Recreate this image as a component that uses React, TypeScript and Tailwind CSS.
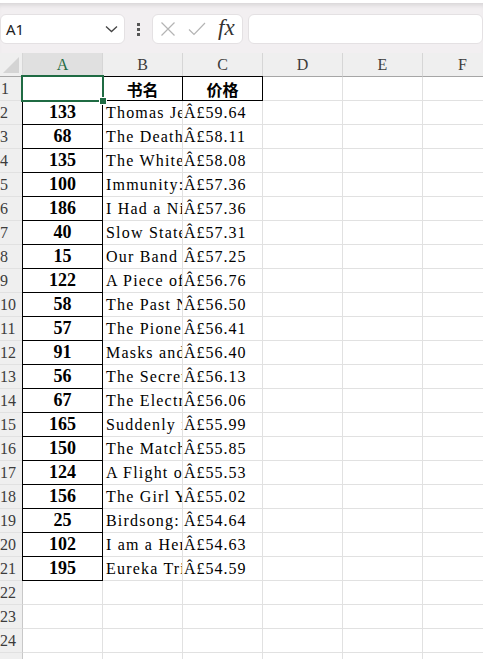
import React from 'react';

const ids = [133, 68, 135, 100, 186, 40, 15, 122, 58, 57, 91, 56, 67, 165, 150, 124, 156, 25, 102, 195];
const titles = [
  'Thomas Jefferson and the Tripoli Pirates',
  'The Death of Humanity',
  'The White Cat and the Monk',
  'Immunity: How Elie Metchnikoff Changed',
  'I Had a Nice Time And Other Lies',
  'Slow States of Collapse: Poems',
  'Our Band Could Be Your Life',
  'A Piece of Sky, a Grain of Rice',
  'The Past Never Ends',
  'The Pioneer Woman Cooks',
  'Masks and Shadows',
  'The Secret of Dreadwillow Carse',
  'The Electric Pickle',
  'Suddenly in Love',
  "The Matchmaker's Playbook",
  'A Flight of Arrows',
  'The Girl You Lost',
  'Birdsong: A Story in Pictures',
  'I am a Hero Omnibus Volume 1',
  'Eureka Trivia 6.0',
];
const prices = ['59.64', '58.11', '58.08', '57.36', '57.36', '57.31', '57.25', '56.76', '56.50', '56.41', '56.40', '56.13', '56.06', '55.99', '55.85', '55.53', '55.02', '54.64', '54.63', '54.59'];

const cols = ['A', 'B', 'C', 'D', 'E', 'F'];
const serif = "font-['Liberation_Serif',serif]";
const cell = 'h-6 border-r border-b border-[#e1e1e1] overflow-hidden whitespace-nowrap';
const boxed = 'h-6 border-r border-b border-black shadow-[0_-1px_0_#000,-1px_0_0_#000,-1px_-1px_0_#000] overflow-hidden whitespace-nowrap';
const rowHead = "h-6 bg-[#efefef] border-r border-b border-r-[#c8c8c8] border-b-[#e1e1e1] font-['Liberation_Serif',serif] text-[16px] leading-[23px] text-[#3c3c3c] overflow-hidden whitespace-nowrap";

const Toolbar: React.FC = () => (
  <div className="h-[53px] bg-[#f2eff1] shadow-[inset_0_5px_5px_-3px_rgba(0,0,0,0.12)] border-t-[3px] border-white flex items-start pt-[11px] font-['Noto_Sans',sans-serif]">
    {/* name box */}
    <div className="w-[125px] h-[30px] bg-white rounded-md border border-[#e4e1e3] flex items-center justify-between pl-[5px] pr-[6px]">
      <span className="text-[15px] text-[#222]">A1</span>
      <svg width="13" height="8" viewBox="0 0 13 8" fill="none" stroke="#444" strokeWidth="1.3">
        <path d="M1 1.5l5.5 5 5.5-5" />
      </svg>
    </div>
    <div className="w-[27px] h-[30px] flex flex-col items-center justify-center gap-[2px]">
      <span className="w-[3px] h-[3px] bg-[#555]"></span>
      <span className="w-[3px] h-[3px] bg-[#555]"></span>
      <span className="w-[3px] h-[3px] bg-[#555]"></span>
    </div>
    {/* cancel / enter / fx */}
    <div className="w-[91px] h-[30px] bg-white rounded-md border border-[#e4e1e3] flex items-center pl-[7px] gap-[12px]">
      <svg width="16" height="16" viewBox="0 0 16 16" stroke="#b4b4b4" strokeWidth="1.2">
        <path d="M1.5 1.5l13 13M14.5 1.5l-13 13" />
      </svg>
      <svg width="18" height="14" viewBox="0 0 18 14" fill="none" stroke="#b4b4b4" strokeWidth="1.2">
        <path d="M1 7.5l5 5L17 1" />
      </svg>
      <span className="font-['Liberation_Serif',serif] italic text-[23px] leading-none text-[#333] -mt-[3px]">fx</span>
    </div>
    <div className="ml-[5px] flex-1 h-[30px] bg-white rounded-md border border-[#e4e1e3]"></div>
  </div>
);

const App: React.FC = () => (
  <div className="w-[483px] h-[659px] overflow-hidden bg-white">
    <Toolbar />
    <div className={`relative grid grid-cols-[23px_repeat(6,80px)] ${serif}`}>
      {/* header row */}
      <div className="h-6 bg-[#efefef] border-r border-b border-r-[#d6d6d6] border-b-[#a6a6a6] flex items-end justify-end pr-[3px] pb-[3px]">
        <svg width="16" height="16" viewBox="0 0 16 16">
          <path d="M16 0V16H0Z" fill="#d4d4d4" />
        </svg>
      </div>
      {cols.map((c) => (
        <div
          key={c}
          className={`h-6 border-r border-b border-r-[#d6d6d6] border-b-[#a6a6a6] flex items-center justify-center font-['Liberation_Serif',serif] text-[16px] ${
            c === 'A' ? 'bg-[#e0e0e0] text-[#1f6b43]' : 'bg-[#efefef] text-[#3c3c3c]'
          }`}
        >
          {c}
        </div>
      ))}

      {/* row 1 */}
      <div className={`${rowHead} bg-[#e0e0e0] text-[#1f6b43] pl-[1px]`}>1</div>
      <div className={cell}></div>
      <div className={`${boxed} flex items-center justify-center font-['Noto_Sans_CJK_SC',sans-serif] font-bold text-[16px] text-black`}>书名</div>
      <div className={`${boxed} flex items-center justify-center font-['Noto_Sans_CJK_SC',sans-serif] font-bold text-[16px] text-black`}>价格</div>
      <div className={cell}></div>
      <div className={cell}></div>
      <div className={cell}></div>

      {ids.map((id, i) => (
        <React.Fragment key={id}>
          <div className={rowHead}>{i + 2}</div>
          <div className={`${boxed} flex items-center justify-center font-bold text-[18px] text-black`}>{id}</div>
          <div className={`${cell} text-[16px] leading-[24px] pl-[3px] tracking-[1.2px] text-black`}>{titles[i]}</div>
          <div className={`${cell} text-[16px] leading-[24px] pl-[1px] tracking-[1px] text-black`}>Â£{prices[i]}</div>
          <div className={cell}></div>
          <div className={cell}></div>
          <div className={cell}></div>
        </React.Fragment>
      ))}

      {[22, 23, 24, 25].map((r) => (
        <React.Fragment key={r}>
          <div className={rowHead}>{r}</div>
          {cols.map((c) => (
            <div key={c} className={cell}></div>
          ))}
        </React.Fragment>
      ))}

      {/* active cell A1 */}
      <div className="absolute left-[21px] top-[22px] w-[83px] h-[27px] border-2 border-[#1f6b43]">
        <div className="absolute -right-[4px] -bottom-[4px] w-[6px] h-[6px] bg-[#1f6b43] outline outline-1 outline-white"></div>
      </div>
    </div>
  </div>
);

export default App;
